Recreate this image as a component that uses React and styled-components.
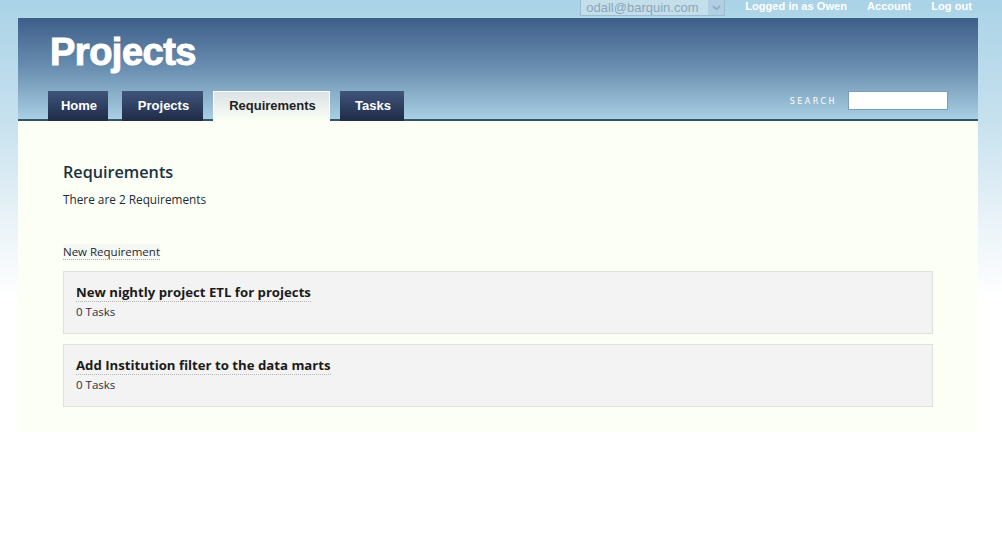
import React from "react";
import styled, { createGlobalStyle } from "styled-components";

const GlobalStyle = createGlobalStyle`
  html, body { margin: 0; padding: 0; }
  body {
    background: #ffffff linear-gradient(to bottom, #aad3e7 0px, #c6e1ee 120px, #e9f3f8 220px, #ffffff 300px) no-repeat;
    min-height: 549px;
    font-family: "Open Sans", "DejaVu Sans", sans-serif;
  }
`;

const TopBar = styled.div`
  height: 18px;
  display: flex;
  align-items: flex-start;
  justify-content: flex-end;
  gap: 20px;
  padding-right: 30px;
  font-family: "Liberation Sans", Arial, sans-serif;
`;

const FakeSelect = styled.div`
  width: 145px;
  height: 16px;
  box-sizing: border-box;
  border: 1px solid #9cbccf;
  border-top: none;
  background: #c4deec;
  display: flex;
  align-items: center;
  justify-content: space-between;
  color: #8ba6b8;
  font-size: 13px;
  padding-left: 5px;
  line-height: 15px;
`;

const SelectArrow = styled.span`
  width: 16px;
  height: 15px;
  background: #b1cfe2;
  display: flex;
  align-items: center;
  justify-content: center;
`;

const TopLink = styled.a`
  color: #ffffff;
  font-weight: bold;
  font-size: 11px;
  line-height: 13px;
  letter-spacing: 0.05px;
  text-decoration: none;
  white-space: nowrap;
`;

const Wrapper = styled.div`
  margin: 0 24px 0 18px;
`;

const Header = styled.div`
  height: 101px;
  border-bottom: 2px solid #325668;
  background: linear-gradient(to bottom, #3e5e89 0%, #6a8fb1 50%, #a8cfe3 100%);
  box-sizing: content-box;
  padding: 0 30px 0 30px;
  display: flex;
  flex-direction: column;
`;

const Title = styled.h1`
  margin: 16px 0 0 2px;
  height: 37px;
  font-family: "Liberation Sans", Arial, sans-serif;
  font-weight: bold;
  font-size: 38px;
  line-height: 37px;
  letter-spacing: -0.5px;
  color: #ffffff;
  -webkit-text-stroke: 1px #ffffff;
`;

const NavRow = styled.div`
  margin-top: 20px;
  margin-bottom: -2px;
  display: flex;
  justify-content: space-between;
  align-items: flex-start;
`;

const Tabs = styled.div`
  display: flex;
  gap: 10px;
`;

const Tab = styled.a`
  width: ${(p) => p.$w}px;
  height: 30px;
  box-sizing: border-box;
  display: flex;
  align-items: center;
  justify-content: center;
  padding: 0 0 2px 2px;
  font-family: "Liberation Sans", Arial, sans-serif;
  font-weight: bold;
  font-size: 13px;
  text-decoration: none;
  white-space: nowrap;
  color: ${(p) => (p.$active ? "#222222" : "#ffffff")};
  background: ${(p) =>
    p.$active
      ? "linear-gradient(to bottom, #dbe2e6 0%, #eef3ef 60%, #fbfff5 100%)"
      : "linear-gradient(to bottom, #3f557b 0%, #2c3c5d 60%, #1f2b45 100%)"};
  border: ${(p) => (p.$active ? "1px solid #ffffff" : "none")};
  border-bottom: none;
  &:first-child {
    margin-right: 4px;
  }
`;

const Search = styled.div`
  display: flex;
  align-items: center;
  gap: 11px;
`;

const SearchLabel = styled.label`
  font-family: "DejaVu Sans", sans-serif;
  font-size: 8px;
  letter-spacing: 2.5px;
  color: #ffffff;
  margin-top: 2px;
`;

const SearchInput = styled.input`
  width: 100px;
  height: 19px;
  box-sizing: border-box;
  border: 1px solid #7d9db6;
  background: #ffffff;
  padding: 0 3px;
  outline: none;
`;

const Content = styled.div`
  background: #fbfff5;
  padding: 38px 45px 25px 45px;
`;

const Heading = styled.h2`
  margin: 0;
  font-family: "Open Sans", sans-serif;
  font-weight: 600;
  font-size: 16.2px;
  line-height: 26px;
  color: #1a3143;
`;

const Summary = styled.p`
  margin: 6px 0 0 0;
  font-size: 11.8px;
  line-height: 16px;
  color: #1c2c3a;
`;

const NewLink = styled.a`
  display: inline-block;
  margin-top: 37px;
  font-size: 11.5px;
  line-height: 15px;
  color: #1f2933;
  text-decoration: none;
  border-bottom: 1px dotted #aab2b8;
  background: #f6f8f4;
`;

const List = styled.div`
  margin-top: 10px;
  display: flex;
  flex-direction: column;
  gap: 10px;
`;

const Card = styled.div`
  background: #f3f3f3;
  border: 1px solid #e0e0e0;
  height: 63px;
  box-sizing: border-box;
  padding: 8px 12px 0 12px;
`;

const CardTitle = styled.a`
  display: inline-block;
  font-family: "Open Sans", sans-serif;
  font-weight: 700;
  font-size: 13.2px;
  line-height: 17px;
  color: #1b1b1b;
  text-decoration: none;
  border-bottom: 1px dotted #b5b5b5;
`;

const CardMeta = styled.div`
  margin-top: 2px;
  font-size: 11.5px;
  line-height: 16px;
  color: #1f3040;
`;

const tabs = [
  { label: "Home", w: 60 },
  { label: "Projects", w: 81 },
  { label: "Requirements", w: 117, active: true },
  { label: "Tasks", w: 64 },
];

const requirements = [
  { title: "New nightly project ETL for projects", tasks: 0 },
  { title: "Add Institution filter to the data marts", tasks: 0 },
];

export default function App() {
  return (
    <>
      <GlobalStyle />
      <TopBar>
        <FakeSelect>
          odall@barquin.com
          <SelectArrow>
            <svg width="9" height="6" viewBox="0 0 9 6">
              <path d="M1 1 L4.5 4.5 L8 1" stroke="#8fb0c6" strokeWidth="1.8" fill="none" />
            </svg>
          </SelectArrow>
        </FakeSelect>
        <TopLink href="#">Logged in as Owen</TopLink>
        <TopLink href="#">Account</TopLink>
        <TopLink href="#">Log out</TopLink>
      </TopBar>
      <Wrapper>
        <Header>
          <Title>Projects</Title>
          <NavRow>
            <Tabs>
              {tabs.map((t) => (
                <Tab key={t.label} href="#" $w={t.w} $active={t.active}>
                  {t.label}
                </Tab>
              ))}
            </Tabs>
            <Search>
              <SearchLabel>SEARCH</SearchLabel>
              <SearchInput type="text" />
            </Search>
          </NavRow>
        </Header>
        <Content>
          <Heading>Requirements</Heading>
          <Summary>There are 2 Requirements</Summary>
          <NewLink href="#">New Requirement</NewLink>
          <List>
            {requirements.map((r) => (
              <Card key={r.title}>
                <CardTitle href="#">{r.title}</CardTitle>
                <CardMeta>{r.tasks} Tasks</CardMeta>
              </Card>
            ))}
          </List>
        </Content>
      </Wrapper>
    </>
  );
}
